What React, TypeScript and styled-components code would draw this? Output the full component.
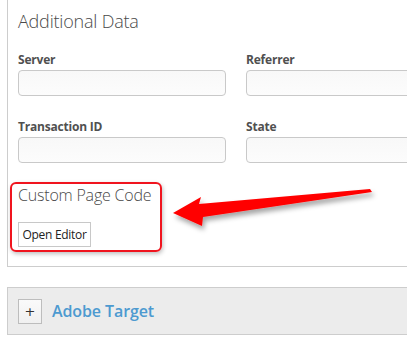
import React from 'react';
import styled, { createGlobalStyle } from 'styled-components';

const GlobalStyle = createGlobalStyle`
  html, body {
    margin: 0;
    padding: 0;
    background: #fff;
    overflow: hidden;
  }
  body {
    font-family: 'Open Sans', 'Liberation Sans', sans-serif;
    color: #4b4b4b;
  }
`;

const Page = styled.div`
  position: relative;
  width: 407px;
  height: 342px;
  padding-left: 7px;
  box-sizing: border-box;
  overflow: hidden;
`;

const Panel = styled.div`
  width: 520px;
  border-left: 1px solid #cdcdcd;
  border-bottom: 1px solid #cdcdcd;
  padding: 9px 10px 19px;
  box-sizing: border-box;
`;

const Heading = styled.h2<{ size?: number }>`
  margin: 0;
  font-size: ${(p) => (p.size ? p.size : 18)}px;
  line-height: 24px;
  font-weight: 300;
  color: #4a4a4a;
  letter-spacing: -0.2px;
`;

const FieldGrid = styled.div`
  display: grid;
  grid-template-columns: 208px 208px;
  column-gap: 20px;
  row-gap: 23px;
  margin-top: 19px;
`;

const Field = styled.div`
  display: flex;
  flex-direction: column;
`;

const Label = styled.label`
  font-size: 12px;
  line-height: 16px;
  font-weight: 700;
  color: #505050;
  letter-spacing: -0.2px;
  margin-bottom: 2px;
`;

const Input = styled.input`
  height: 26px;
  box-sizing: border-box;
  border: 1px solid #c9c9c9;
  border-radius: 4px;
  background: linear-gradient(#f8f8f8, #fcfcfc);
  outline: none;
`;

const Section = styled.div`
  position: relative;
  margin-top: 19px;
  padding-top: 1px;
  display: flex;
  flex-direction: column;
  align-items: flex-start;
`;

const Highlight = styled.div`
  position: absolute;
  left: -8px;
  top: 0;
  width: 152px;
  height: 70px;
  box-sizing: border-box;
  border: 2px solid #f0141e;
  border-radius: 6px;
  box-shadow: 1px 2px 4px rgba(0, 0, 0, 0.25);
`;

const EditorButton = styled.button`
  margin-top: 15px;
  height: 25px;
  width: 73px;
  padding: 0;
  border: 1px solid #c8c8c8;
  background: #fff;
  font-family: 'Open Sans', 'Liberation Sans', sans-serif;
  font-size: 12px;
  letter-spacing: -0.3px;
  color: #222;
  border-radius: 0;
`;

const Accordion = styled.div`
  margin-top: 20px;
  width: 520px;
  height: 48px;
  box-sizing: border-box;
  border: 1px solid #cdcdcd;
  background: #ececec;
  display: flex;
  align-items: center;
  padding-left: 10px;
  gap: 10px;
`;

const ToggleButton = styled.button`
  width: 24px;
  height: 25px;
  padding: 0;
  border: 1px solid #bdbdbd;
  background: linear-gradient(#fafafa, #f0f0f0);
  font-family: 'DejaVu Sans', sans-serif;
  font-size: 13px;
  color: #333;
  line-height: 1;
`;

const AccordionTitle = styled.span`
  font-size: 16px;
  font-weight: 600;
  color: #4d9ad0;
  letter-spacing: -0.1px;
`;

const Arrow = styled.svg`
  position: absolute;
  left: 0;
  top: 0;
  pointer-events: none;
`;

const fields = ['Server', 'Referrer', 'Transaction ID', 'State'];

const App: React.FC = () => {
  return (
    <>
      <GlobalStyle />
      <Page>
        <Panel>
          <Heading>Additional Data</Heading>
          <FieldGrid>
            {fields.map((name) => (
              <Field key={name}>
                <Label>{name}</Label>
                <Input type="text" />
              </Field>
            ))}
          </FieldGrid>
          <Section>
            <Highlight />
            <Heading size={16}>Custom Page Code</Heading>
            <EditorButton>Open Editor</EditorButton>
          </Section>
        </Panel>
        <Accordion>
          <ToggleButton>+</ToggleButton>
          <AccordionTitle>Adobe Target</AccordionTitle>
        </Accordion>
        <Arrow width="407" height="342" viewBox="0 0 407 342">
          <defs>
            <filter id="shadow" x="-10%" y="-50%" width="130%" height="250%">
              <feDropShadow dx="2" dy="4" stdDeviation="2.5" floodColor="#000" floodOpacity="0.35" />
            </filter>
          </defs>
          <polygon
            points="173,213 201,197 199,204 370,189 372,192 203,217 202,226"
            fill="#ff0000"
            filter="url(#shadow)"
          />
        </Arrow>
      </Page>
    </>
  );
};

export default App;
